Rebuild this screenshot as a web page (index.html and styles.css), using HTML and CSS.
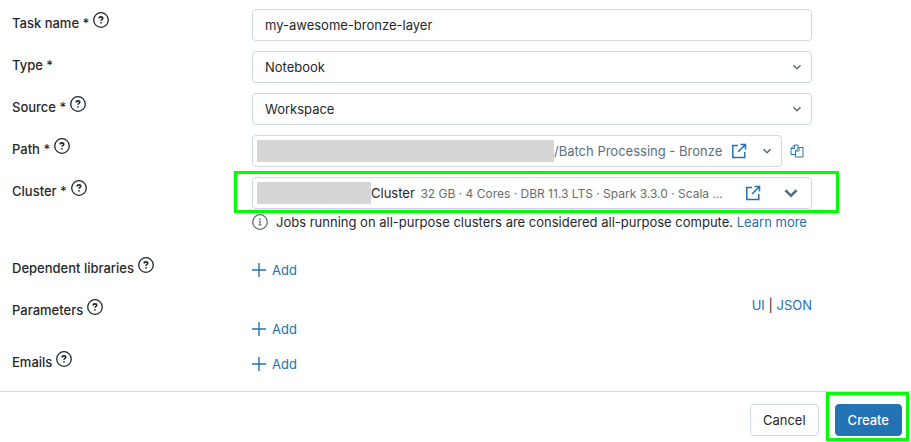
FILE: index.html
```html
<!DOCTYPE html>
<html lang="en">
<head>
<meta charset="utf-8">
<title>Create task</title>
<link rel="stylesheet" href="styles.css">
</head>
<body>
<svg class="sprite" aria-hidden="true">
  <symbol id="help" viewBox="0 0 16 16">
    <circle cx="8" cy="8" r="7.300" fill="none" stroke="currentColor" stroke-width="1.300"/>
    <path d="M6.200 6.400C6.200 5.400 7 4.900 8 4.900s1.800.5 1.800 1.400C9.800 7.300 8 7.400 8 8.700" fill="none" stroke="currentColor" stroke-width="1.600"/>
    <circle cx="8" cy="10.800" r=".9" fill="currentColor"/>
  </symbol>
  <symbol id="info" viewBox="0 0 16 16">
    <circle cx="8" cy="8" r="7.300" fill="none" stroke="currentColor" stroke-width="1.300"/>
    <path d="M6.800 7.300H8V11M6.600 10.800h2.800" fill="none" stroke="currentColor" stroke-width="1.200"/>
    <circle cx="8" cy="5.200" r=".9" fill="currentColor"/>
  </symbol>
  <symbol id="chevron" viewBox="0 0 10 10">
    <path d="M1.500 3.300 5 6.700l3.500-3.400" fill="none" stroke="currentColor" stroke-width="1.600"/>
  </symbol>
  <symbol id="open" viewBox="0 0 16 16">
    <path d="M7 2.500H1.800v12h12V9M9.500 1.500h5v5M14.500 1.500 7 9" fill="none" stroke="currentColor" stroke-width="1.500"/>
  </symbol>
  <symbol id="copy" viewBox="0 0 14 14">
    <path d="M5.500 10.500H1V4.500L4.500 1H8v3M4.500 1v3.500H1M5.500 7 9 3.500h4v9.500H5.500zM9 3.500V7H5.500" fill="none" stroke="currentColor"/>
  </symbol>
  <symbol id="plus" viewBox="0 0 14 14">
    <path d="M7 0v14M0 7h14" fill="none" stroke="currentColor" stroke-width="1.400"/>
  </symbol>
</svg>
<form class="page">
  <main class="form">
    <div class="row">
      <div class="label"><label for="task">Task name *</label><svg class="icon-md"><use href="#help"/></svg></div>
      <input class="box text-input" id="task" type="text" value="my-awesome-bronze-layer">
    </div>
    <div class="row">
      <div class="label"><label for="type">Type *</label></div>
      <div class="box stack">
        <select class="select" id="type"><option>Notebook</option></select>
        <svg class="chevron"><use href="#chevron"/></svg>
      </div>
    </div>
    <div class="row">
      <div class="label"><label for="source">Source *</label><svg class="icon-md"><use href="#help"/></svg></div>
      <div class="box stack">
        <select class="select" id="source"><option>Workspace</option></select>
        <svg class="chevron"><use href="#chevron"/></svg>
      </div>
    </div>
    <div class="row">
      <div class="label"><label for="path">Path *</label><svg class="icon-md"><use href="#help"/></svg></div>
      <div class="path-line">
        <div class="box picker">
          <span class="redacted"></span>
          <select class="path-select" id="path"><option>/Batch Processing - Bronze</option></select>
          <a class="icon-link" href="#notebook" aria-label="Open notebook"><svg class="icon-md"><use href="#open"/></svg></a>
          <svg class="chevron"><use href="#chevron"/></svg>
        </div>
        <button class="copy" type="button" aria-label="Copy path"><svg class="icon-sm"><use href="#copy"/></svg></button>
      </div>
    </div>
    <div class="row">
      <div class="label"><label for="cluster">Cluster *</label><svg class="icon-md"><use href="#help"/></svg></div>
      <div>
        <div class="box picker cluster">
          <span class="redacted redacted-short"></span>
          <button class="cluster-value" id="cluster" type="button" aria-haspopup="listbox">Cluster <span class="specs">32 GB · 4 Cores · DBR 11.3 LTS · Spark 3.3.0 · Scala ...</span></button>
          <a class="icon-link icon-link-wide" href="#cluster-details" aria-label="Open cluster"><svg class="icon-md"><use href="#open"/></svg></a>
          <svg class="chevron chevron-lg"><use href="#chevron"/></svg>
        </div>
        <p class="note"><svg class="icon-md"><use href="#info"/></svg><span>Jobs running on all-purpose clusters are considered all-purpose compute. <a href="#learn">Learn more</a></span></p>
      </div>
    </div>
    <div class="row">
      <div class="label"><span>Dependent libraries</span><svg class="icon-md"><use href="#help"/></svg></div>
      <button class="add" type="button"><svg class="icon-sm"><use href="#plus"/></svg>Add</button>
    </div>
    <div class="row">
      <div class="label"><span>Parameters</span><svg class="icon-md"><use href="#help"/></svg></div>
      <div class="parameters">
        <div class="modes"><a href="#ui">UI</a> | <a href="#json">JSON</a></div>
        <button class="add" type="button"><svg class="icon-sm"><use href="#plus"/></svg>Add</button>
      </div>
    </div>
    <div class="row">
      <div class="label"><span>Emails</span><svg class="icon-md"><use href="#help"/></svg></div>
      <button class="add" type="button"><svg class="icon-sm"><use href="#plus"/></svg>Add</button>
    </div>
  </main>
  <footer class="footer">
    <button class="btn" type="button">Cancel</button>
    <span class="marked"><button class="btn primary" type="submit">Create</button></span>
  </footer>
</form>
</body>
</html>
```

FILE: styles.css
```css
* { box-sizing: border-box; }
body {
  margin: 0;
  background: #fff;
  color: #1f272d;
  font: 13px/20px Inter, "Liberation Sans", sans-serif;
}
button, input, select { font: inherit; color: inherit; margin: 0; }
button { padding: 0; border: 0; background: none; text-align: left; white-space: nowrap; }
select { appearance: none; border: 0; background: none; padding: 0; }
a { color: #2272b4; text-decoration: none; }
svg { display: block; flex: none; }
.sprite { position: absolute; width: 0; height: 0; }
.icon-md { width: 16px; height: 16px; }
.icon-sm { width: 14px; height: 14px; }

.form { display: grid; gap: 10px; padding: 9px 12px 11px; }
.row { display: grid; grid-template-columns: 240px minmax(0, 560px); align-items: start; min-height: 32px; }
.label { display: flex; gap: 4px; padding-top: 3px; font-weight: 500; }
.label > :first-child { padding-top: 1px; }

.box { width: 100%; height: 32px; border: 1px solid #cddae5; border-radius: 4px; background: #fff; }
.text-input { padding: 0 12px; }
.stack { display: grid; align-items: center; }
.stack > * { grid-area: 1 / 1; }
.select { width: 100%; height: 30px; padding: 0 12px; }
.chevron { width: 10px; height: 10px; margin-right: 9px; justify-self: end; color: #5a6f80; pointer-events: none; }

.path-line { display: flex; align-items: center; gap: 8px; padding-right: 8px; }
.copy { color: #2272b4; }
.picker { display: flex; align-items: center; padding-left: 4px; }
.redacted { flex: 1; min-width: 0; height: 22px; background: #d6d6d6; }
.redacted-short { flex: none; width: 114px; }
.path-select { flex: none; color: #5a6f80; }
.icon-link { margin: 0 15px 0 8px; color: #2272b4; }
.icon-link-wide { margin-right: 22px; }

/* Highlight frame round the cluster field */
.cluster { position: relative; }
.cluster::before {
  content: "";
  position: absolute;
  inset: -7px -28px -5px -19px;
  border: 3px solid #0f0;
  pointer-events: none;
}
.cluster-value { flex: 1; min-width: 0; overflow: hidden; }
.specs { margin-left: 2px; color: #6b6b6b; font-size: 12px; }
.chevron-lg { width: 16px; height: 16px; margin-right: 12px; }
.note { display: flex; align-items: center; gap: 8px; margin: 3px 0 12px; }
.note svg { color: #5a6f80; }

.add { display: flex; align-items: center; gap: 6px; padding: 6px 0; color: #2272b4; }
.parameters { line-height: 18px; }
.parameters .add { padding-bottom: 0; }
.modes { text-align: right; }

.footer { display: flex; justify-content: flex-end; align-items: center; gap: 7px; padding: 0 2px 0 12px; border-top: 1px solid #cddae5; }
.btn { height: 32px; padding: 0 12px; border: 1px solid #cddae5; border-radius: 4px; background: #fff; }
.footer > .btn { margin-top: 7px; }
.primary { border-color: #2272b4; background: #2272b4; color: #fff; font-weight: 500; }
.marked { display: flex; padding: 9px 4px 2px 6px; border: 3px solid #0f0; }
```
